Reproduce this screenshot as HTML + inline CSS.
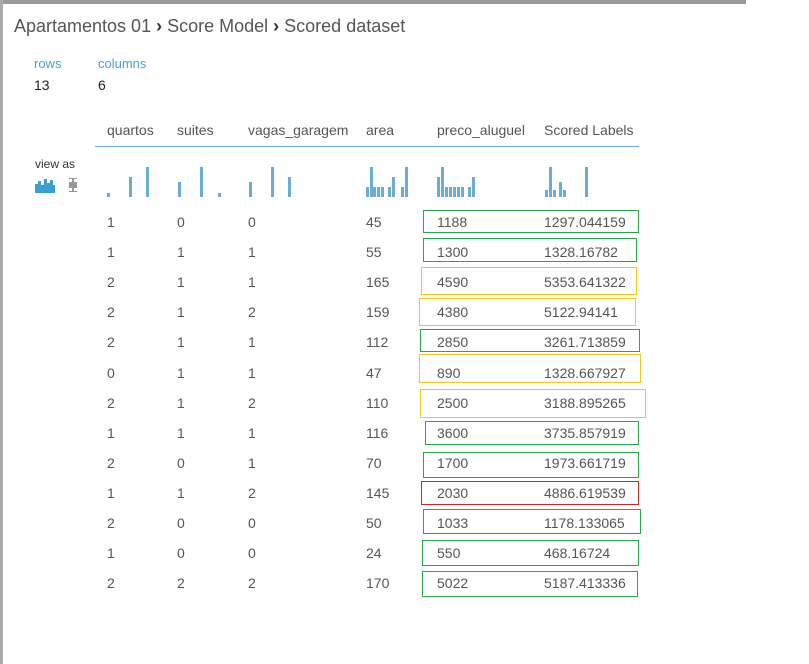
<!DOCTYPE html>
<html><head><meta charset="utf-8"><style>
body{margin:0;width:809px;height:664px;background:#fff;position:relative;overflow:hidden;font-family:"Liberation Sans",sans-serif;color:#555;}
.a{position:absolute;white-space:nowrap}
.t{font-size:14px}
.b{position:absolute;border:1px solid}
.g{border-color:#22aa44}.y{border-color:#f5c518}.r{border-color:#dd2222}
.bar{position:absolute;background:#6aaed6;width:3px}
</style></head><body>
<div class="a" style="left:0;top:0;width:746px;height:4px;background:#999"></div>
<div class="a" style="left:0;top:0;width:3px;height:664px;background:#aaa"></div>
<div class="a" style="left:14px;top:16px;font-size:18px;color:#555">Apartamentos 01 <b style="color:#333">›</b> Score Model <b style="color:#333">›</b> Scored dataset</div>
<div class="a t" style="left:34px;top:56px;color:#4a9fd4;font-size:13px">rows</div>
<div class="a t" style="left:98px;top:56px;color:#4a9fd4;font-size:13px">columns</div>
<div class="a t" style="left:34px;top:77px;color:#222">13</div>
<div class="a t" style="left:98px;top:77px;color:#222">6</div>
<div class="a" style="left:35px;top:157px;font-size:12px;color:#333">view as</div>
<svg class="a" style="left:35px;top:177px" width="45" height="16">
<g fill="#3a9fd4"><rect x="0" y="7" width="3" height="9"/><rect x="3" y="4" width="3" height="12"/><rect x="6" y="8" width="3" height="8"/><rect x="9" y="2" width="3" height="14"/><rect x="12" y="6" width="3" height="10"/><rect x="15" y="3" width="3" height="13"/><rect x="18" y="8" width="2" height="8"/></g>
<g fill="#999"><rect x="37" y="1" width="2" height="14"/><rect x="34" y="1" width="8" height="1"/><rect x="34" y="14" width="8" height="1"/><rect x="34" y="5" width="8" height="6"/></g>
</svg>
<div class="a t" style="left:107px;top:122px">quartos</div>
<div class="a t" style="left:177px;top:122px">suites</div>
<div class="a t" style="left:248px;top:122px">vagas_garagem</div>
<div class="a t" style="left:366px;top:122px">area</div>
<div class="a t" style="left:437px;top:122px">preco_aluguel</div>
<div class="a t" style="left:544px;top:122px">Scored Labels</div>
<div class="a" style="left:95px;top:146px;width:544px;height:1px;background:#6aaed6"></div>
<div id="h"></div>
<div id="rows"></div>
<script>
var H=[[107,193],[129,177],[146,167],[178,182],[200,167],[218,193],[249,182],[271,167],[288,177],
[366,187],[370,167],[373,187],[377,187],[381,187],[388,187],[392,177],[401,187],[405,167],
[437,177],[441,167],[445,187],[449,187],[453,187],[457,187],[461,187],[468,187],[472,177],
[545,190],[549,167],[553,190],[559,182],[563,190],[585,167]];
var s='';H.forEach(function(b){s+='<div class="bar" style="left:'+b[0]+'px;top:'+b[1]+'px;height:'+(197-b[1])+'px"></div>'});
document.getElementById('h').innerHTML=s;
var R=[[1,0,0,45,1188,'1297.044159','g',423,210,639,233],[1,1,1,55,1300,'1328.16782','g',423,238,637,262],
[2,1,1,165,4590,'5353.641322','y',421,267,637,295],[2,1,2,159,4380,'5122.94141','y',419,298,636,326],
[2,1,1,112,2850,'3261.713859','g',420,329,640,352],[0,1,1,47,890,'1328.667927','y',419,354,641,383],
[2,1,2,110,2500,'3188.895265','y',420,389,646,418],[1,1,1,116,3600,'3735.857919','g',425,421,639,445],
[2,0,1,70,1700,'1973.661719','g',423,452,639,478],[1,1,2,145,2030,'4886.619539','r',421,481,639,505],
[2,0,0,50,1033,'1178.133065','g',423,509,641,534],[1,0,0,24,550,'468.16724','g',422,540,639,566],
[2,2,2,170,5022,'5187.413336','g',422,571,638,597]];
var X=[107,177,248,366,437,544];s='';
R.forEach(function(r,i){var y=214+i*30.1;
for(var j=0;j<6;j++)s+='<div class="a t" style="left:'+X[j]+'px;top:'+y+'px">'+r[j]+'</div>';
s+='<div class="b '+r[6]+'" style="left:'+r[7]+'px;top:'+r[8]+'px;width:'+(r[9]-r[7]-2)+'px;height:'+(r[10]-r[8]-2)+'px"></div>';});
document.getElementById('rows').innerHTML=s;
</script>
</body></html>
